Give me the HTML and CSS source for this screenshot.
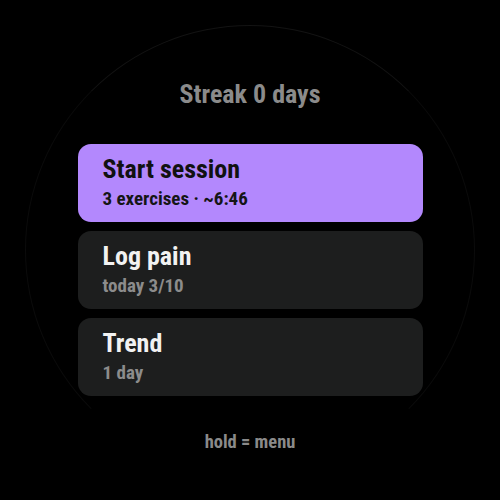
FILE: index.html
```html
<!DOCTYPE html>
<html>
<head>
    <link rel="stylesheet" href="styles.css">
</head>
<body>
    <div class="screen">
        <div class="streak">Streak 0 days</div>

        <div class="menu">
            <div class="chip chip-primary">
                <div class="chip-title">Start session</div>
                <div class="chip-sub">3 exercises · ~6:46</div>
            </div>
            <div class="chip">
                <div class="chip-title">Log pain</div>
                <div class="chip-sub">today 3/10</div>
            </div>
            <div class="chip">
                <div class="chip-title">Trend</div>
                <div class="chip-sub">1 day</div>
            </div>
        </div>

        <div class="hint">hold = menu</div>
    </div>
</body>
</html>
```

FILE: styles.css
```css
body {
    margin: 0;
    background-color: #000;
    font-family: "Roboto Condensed", "Liberation Sans Narrow", "DejaVu Sans Condensed", sans-serif;
    font-weight: bold;
}
.screen {
    width: 450px;
    height: 450px;
    margin: 25px auto;
    box-sizing: border-box;
    border: 1px solid;
    border-color: #131313 #0b0b0b #000 #0b0b0b;
    border-radius: 50%;
    display: flex;
    flex-direction: column;
    align-items: center;
    padding-top: 54px;
}
.streak {
    font-size: 26px;
    line-height: 28px;
    color: #8b8b8b;
}
.menu {
    margin-top: 36px;
    display: flex;
    flex-direction: column;
    gap: 9px;
}
.chip {
    width: 345px;
    height: 78px;
    box-sizing: border-box;
    padding: 10px 25px 0;
    border-radius: 13px;
    background-color: #1d1e1e;
    color: #f2f2f2;
}
.chip-primary {
    background-color: #b388fd;
    color: #111;
}
.chip-title {
    font-size: 26px;
    line-height: 30px;
}
.chip-sub {
    margin-top: 5px;
    font-size: 19px;
    line-height: 20px;
    color: #8c8c8c;
}
.chip-primary .chip-sub {
    color: #151515;
}
.hint {
    margin-top: 35px;
    font-size: 18.5px;
    line-height: 22px;
    color: #8a8a8a;
}
```
